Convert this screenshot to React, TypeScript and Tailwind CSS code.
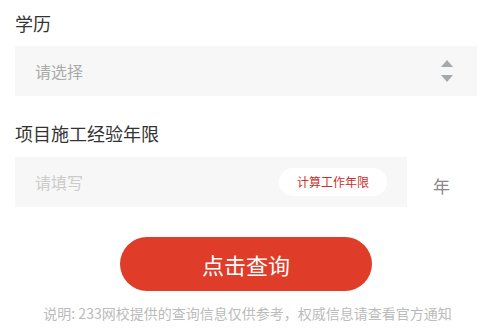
const font = { fontFamily: '"Noto Sans CJK SC", "Noto Sans", sans-serif' };

function SortArrows() {
  return (
    <svg width="12" height="22" viewBox="0 0 12 22" className="fill-[#a4a9ae]">
      <polygon points="6,0 12,7 0,7" />
      <polygon points="0,15 12,15 6,22" />
    </svg>
  );
}

export default function App() {
  return (
    <div className="w-[495px] h-[336px] bg-white px-[15px] pt-[11px] overflow-hidden" style={font}>
      {/* 学历 */}
      <div className="text-[18px] leading-[24px] text-[#333]">学历</div>
      <div className="mt-[11px] w-[462px] h-[50px] bg-[#f7f7f7] pl-[20px] pr-[24px] flex items-center justify-between">
        <span className="text-[16px] text-[#aaa]">请选择</span>
        <SortArrows />
      </div>

      {/* 项目施工经验年限 */}
      <div className="mt-[25px] text-[18px] leading-[24px] text-[#333]">项目施工经验年限</div>
      <div className="mt-[12px] flex items-center">
        <div className="w-[392px] h-[50px] bg-[#f7f7f7] pl-[20px] pr-[20px] flex items-center justify-between">
          <span className="text-[16px] text-[#ccc]">请填写</span>
          <button className="w-[108px] h-[28px] rounded-full bg-white text-[12px] text-[#c9302c] flex items-center justify-center">
            计算工作年限
          </button>
        </div>
        <span className="ml-[26px] mt-[8px] text-[17px] text-[#888]">年</span>
      </div>

      {/* 查询按钮 */}
      <button className="mt-[30px] ml-[105px] w-[252px] h-[54px] rounded-full bg-[#e03c2a] text-white text-[22px] flex items-center justify-center">
        点击查询
      </button>

      <p className="mt-[12px] text-center text-[14px] leading-[20px] text-[#bbb]">
        说明: 233网校提供的查询信息仅供参考，权威信息请查看官方通知
      </p>
    </div>
  );
}
